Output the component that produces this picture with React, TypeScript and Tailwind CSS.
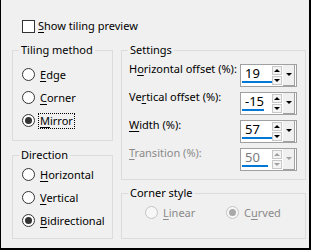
import React from 'react'

const FONT = { fontFamily: '"Noto Sans", "Open Sans", sans-serif' }

function Radio({ label, mnemonic, checked = false, disabled = false, focused = false }: {
  label: string
  mnemonic: number
  checked?: boolean
  disabled?: boolean
  focused?: boolean
}) {
  const before = label.slice(0, mnemonic)
  const key = label.slice(mnemonic, mnemonic + 1)
  const after = label.slice(mnemonic + 1)
  return (
    <div className="flex items-center h-[23px]">
      <span
        className={`flex h-[13px] w-[13px] shrink-0 items-center justify-center rounded-full border ${
          disabled ? 'border-[#c4c4c4] bg-[#f7f7f7]' : 'border-[#333333] bg-white'
        }`}
      >
        {checked && (
          <span className={`h-[7px] w-[7px] rounded-full ${disabled ? 'bg-[#a8a8a8]' : 'bg-[#333333]'}`} />
        )}
      </span>
      <span
        className={`ml-[3px] leading-[14px] ${
          focused ? 'border border-dotted border-black px-[1px]' : 'border border-transparent px-[1px]'
        } ${disabled ? 'text-[#8a8a8a]' : 'text-black'}`}
      >
        {before}
        <span className="underline underline-offset-[2px]">{key}</span>
        {after}
      </span>
    </div>
  )
}

function Mn({ text, at, disabled = false }: { text: string; at: number; disabled?: boolean }) {
  return (
    <span className={`leading-[16px] ${disabled ? 'text-[#8a8a8a]' : 'text-black'}`}>
      {text.slice(0, at)}
      <span className="underline underline-offset-[2px]">{text.slice(at, at + 1)}</span>
      {text.slice(at + 1)}
    </span>
  )
}

function Spin({ value, bar, disabled = false }: { value: string; bar: number; disabled?: boolean }) {
  const tri = disabled ? 'border-[#a0a0a0]' : 'border-black'
  return (
    <div className="mt-[3px] flex h-[23px] w-[57px] border border-[#a0a0a0] bg-white">
      <div className="flex w-[31px] flex-col pl-[1px]">
        <span
          className={`pl-[3px] text-[13px] leading-[17px] ${disabled ? 'text-[#7a7a7a]' : 'text-black'}`}
        >
          {value}
        </span>
        <div className="mt-[-1px] h-[2px] bg-[#0078d7]" style={{ width: bar }} />
      </div>
      <div className="flex w-[10px] flex-col justify-center gap-[1px]">
        <div className="flex h-[9px] items-center justify-center border border-[#c8c8c8] bg-[#f4f4f4]">
          <span className={`h-0 w-0 border-x-[3px] border-b-[3px] border-x-transparent ${tri}`} />
        </div>
        <div className="flex h-[9px] items-center justify-center border border-[#c8c8c8] bg-[#f4f4f4]">
          <span className={`h-0 w-0 border-x-[3px] border-t-[3px] border-x-transparent ${tri}`} />
        </div>
      </div>
      <div className="ml-[1px] flex w-[12px] justify-center border-r border-b border-[#a0a0a0] bg-[#f0f0f0] pt-[8px]">
        <span className={`h-0 w-0 border-x-[3px] border-t-[3px] border-x-transparent ${tri}`} />
      </div>
    </div>
  )
}

function Group({ title, className, children }: { title: string; className: string; children: React.ReactNode }) {
  return (
    <fieldset className={`border border-[#dcdcdc] ${className}`}>
      <legend className="ml-[6px] px-[2px] leading-[16px] text-black">{title}</legend>
      {children}
    </fieldset>
  )
}

export default function App() {
  return (
    <div
      className="h-[250px] w-[311px] border-l border-r-2 border-b-2 border-black bg-[#f0f0f0] pt-[18px] text-[11px] text-black"
      style={FONT}
    >
      <div className="flex h-[16px] items-center pl-[21px]">
        <span className="h-[13px] w-[13px] border border-[#333333] bg-white" />
        <span className="ml-[3px]">
          <Mn text="Show tiling preview" at={0} />
        </span>
      </div>

      <div className="mt-[8px] flex gap-[8px] pl-[11px]">
        <div className="flex w-[101px] flex-col gap-[6px]">
          <Group title="Tiling method" className="h-[99px]">
            <div className="pl-[9px] pt-[5px]">
              <Radio label="Edge" mnemonic={0} />
              <Radio label="Corner" mnemonic={0} />
              <Radio label="Mirror" mnemonic={0} checked focused />
            </div>
          </Group>
          <Group title="Direction" className="h-[92px]">
            <div className="pl-[9px]">
              <Radio label="Horizontal" mnemonic={0} />
              <Radio label="Vertical" mnemonic={0} />
              <Radio label="Bidirectional" mnemonic={0} checked />
            </div>
          </Group>
        </div>

        <div className="flex w-[185px] flex-col gap-[5px]">
          <Group title="Settings" className="h-[138px]">
            <div className="flex flex-col pl-[7px] pr-[8px] pt-[3px]">
              <div className="flex h-[28px] items-start justify-between">
                <Mn text="Horizontal offset (%):" at={1} />
                <Spin value="19" bar={31} />
              </div>
              <div className="flex h-[28px] items-start justify-between">
                <Mn text="Vertical offset (%):" at={2} />
                <Spin value="-15" bar={22} />
              </div>
              <div className="flex h-[28px] items-start justify-between">
                <Mn text="Width (%):" at={0} />
                <Spin value="57" bar={30} />
              </div>
              <div className="flex h-[28px] items-start justify-between">
                <Mn text="Transition (%):" at={0} disabled />
                <Spin value="50" bar={26} disabled />
              </div>
            </div>
          </Group>
          <Group title="Corner style" className="h-[54px]">
            <div className="flex pl-[23px]">
              <div className="w-[81px]">
                <Radio label="Linear" mnemonic={0} disabled />
              </div>
              <Radio label="Curved" mnemonic={1} checked disabled />
            </div>
          </Group>
        </div>
      </div>
    </div>
  )
}
